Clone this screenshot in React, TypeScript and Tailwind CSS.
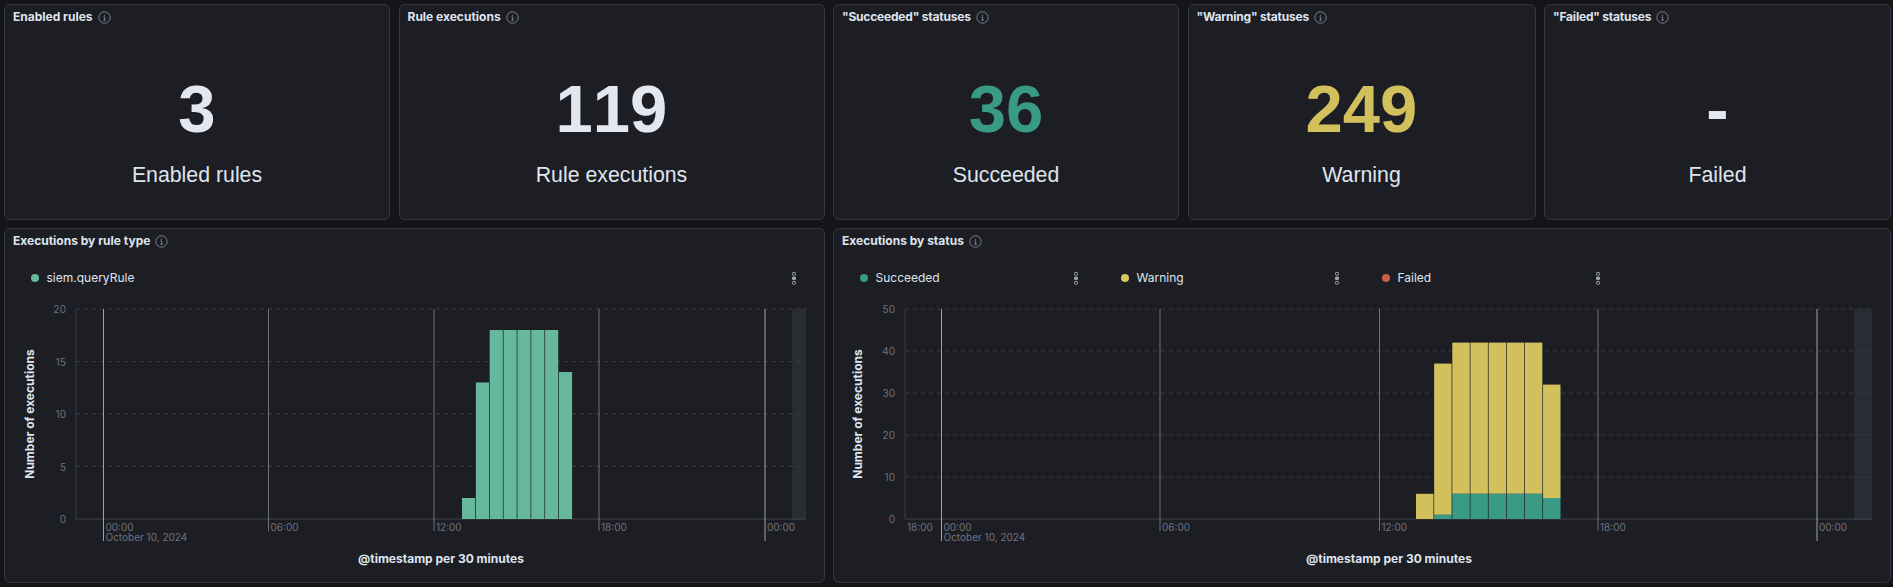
import React from 'react';

const sans = 'font-["Inter",sans-serif]';

interface StatProps {
  title: string;
  value: string;
  label: string;
  width: string;
  color: string;
  titleClass?: string;
}

const InfoIcon: React.FC = () => (
  <svg viewBox="0 0 16 16" className="w-[13px] h-[13px] text-[#98a2b3] shrink-0" fill="none" stroke="currentColor">
    <circle cx="8" cy="8" r="7" strokeWidth="0.9" />
    <path d="M6.6 7.2h1.6v4M6.4 11.3h3.4" strokeWidth="0.9" />
    <circle cx="7.9" cy="4.9" r="0.7" fill="currentColor" stroke="none" />
  </svg>
);

const BoxesIcon: React.FC = () => (
  <svg viewBox="0 0 4 13" className="w-[4px] h-[13px] text-[#a6aab2]" fill="none" stroke="currentColor" strokeWidth="0.9">
    <rect x="0.45" y="0.5" width="3.1" height="2.6" rx="0.6" />
    <rect x="0.45" y="5" width="3.1" height="2.6" rx="0.6" fill="currentColor" />
    <rect x="0.45" y="9.5" width="3.1" height="2.6" rx="0.6" />
  </svg>
);

const PanelTitle: React.FC<{ title: string; className?: string }> = ({ title, className = '' }) => (
  <div className={`flex items-center gap-[5px] h-[20px] ${sans} text-[12px] font-bold text-[#dfe5ef]`}>
    <span className={className}>{title}</span>
    <InfoIcon />
  </div>
);

const StatCard: React.FC<StatProps> = ({ title, value, label, width, color, titleClass }) => (
  <div className={`${width} h-[216px] shrink-0 flex flex-col bg-[#1d1e24] border border-[#343741] rounded-md pl-[8px] pt-[2px]`}>
    <PanelTitle title={title} className={titleClass} />
    <div className="flex flex-col items-center font-['Liberation_Sans',Arial,sans-serif] pr-[8px]">
      <div className={`mt-[44px] h-[76px] leading-[76px] text-[67px] font-bold [font-kerning:none] ${color}`}>{value}</div>
      <div className="mt-[16px] text-[21.3px] leading-[24px] text-[#dfe5ef]">{label}</div>
    </div>
  </div>
);

interface Bar {
  green: number;
  yellow: number;
}

interface ChartProps {
  box: string;
  axisX: number;
  endX: number;
  bandX: number;
  yMax: number;
  yTicks: number[];
  lines: { x: number; label: string }[];
  bars: Bar[];
  barX: number;
  barW: number;
  greenColor: string;
  leftTick?: { x: number; label: string };
  titleX: number;
  axisTitleX: number;
  tickX: number;
}

const TOP = 309;
const BOTTOM = 519;

// viewBox is in page coordinates, easier to line up with the screenshot
const Chart: React.FC<ChartProps> = ({ box, axisX, endX, bandX, yMax, yTicks, lines, bars, barX, barW, greenColor, leftTick, titleX, axisTitleX, tickX }) => {
  const y = (v: number) => BOTTOM - (v / yMax) * (BOTTOM - TOP);
  const [, , w, h] = box.split(' ').map(Number);
  return (
    <svg viewBox={box} width={w} height={h} className={`block ${sans}`}>
      <rect x={bandX} y={TOP} width={endX - bandX} height={BOTTOM - TOP + 1} fill="#2a2c33" />
      <line x1={axisX} x2={axisX} y1={TOP} y2={BOTTOM} stroke="#3a3c44" />
      <line x1={axisX} x2={endX} y1={BOTTOM} y2={BOTTOM} stroke="#3f4149" />
      {yTicks.map((t) => (
        <g key={t}>
          {t > 0 && <line x1={axisX} x2={endX} y1={y(t)} y2={y(t)} stroke="#3a3c44" strokeDasharray="4 4" />}
          <text x={tickX} y={y(t) + 4} textAnchor="end" fontSize="10" fill="#6d7280">{t}</text>
        </g>
      ))}
      {lines.map((l, i) => (
        <g key={l.x}>
          <line x1={l.x} x2={l.x} y1={TOP} y2={i === 0 || i === lines.length - 1 ? 541 : 531} stroke={i === 0 || i === lines.length - 1 ? '#a0a3aa' : '#6e7077'} />
          <text x={l.x + 2} y={531} fontSize="10" fill="#6d7280">{l.label}</text>
        </g>
      ))}
      <text x={lines[0].x + 2} y={541} fontSize="10" fill="#6d7280">October 10, 2024</text>
      {leftTick && <text x={leftTick.x} y={531} fontSize="10" fill="#6d7280">{leftTick.label}</text>}
      {bars.map((b, i) => {
        const x = barX + i * barW;
        return (
          <g key={i}>
            {b.yellow > 0 && <rect x={x} y={y(b.green + b.yellow)} width={barW - 0.7} height={(b.yellow / yMax) * (BOTTOM - TOP)} fill="#d2c05d" />}
            {b.green > 0 && <rect x={x} y={y(b.green)} width={barW - 0.7} height={(b.green / yMax) * (BOTTOM - TOP)} fill={greenColor} />}
          </g>
        );
      })}
      <text transform={`translate(${titleX} 414) rotate(-90)`} textAnchor="middle" fontSize="12" fontWeight="700" fill="#dfe5ef">Number of executions</text>
      <text x={axisTitleX} y={563} textAnchor="middle" fontSize="12" fontWeight="700" fill="#dfe5ef">@timestamp per 30 minutes</text>
    </svg>
  );
};

const LegendItem: React.FC<{ label: string; dot: string; width: string }> = ({ label, dot, width }) => (
  <div className={`flex items-center justify-between ${width} ${sans} text-[12px] text-[#dfe5ef]`}>
    <div className="flex items-center gap-[7.5px]">
      <span className={`w-2 h-2 rounded-full ${dot}`} />
      <span>{label}</span>
    </div>
    <BoxesIcon />
  </div>
);

const ruleBars: Bar[] = [2, 13, 18, 18, 18, 18, 18, 14].map((n) => ({ green: n, yellow: 0 }));
const statusBars: Bar[] = [
  { green: 0, yellow: 6 },
  { green: 1, yellow: 36 },
  { green: 6, yellow: 36 },
  { green: 6, yellow: 36 },
  { green: 6, yellow: 36 },
  { green: 6, yellow: 36 },
  { green: 6, yellow: 36 },
  { green: 5, yellow: 27 },
];

const App: React.FC = () => {
  return (
    <div className="w-[1893px] h-[587px] overflow-hidden bg-[#14151a] pl-[4px] pt-[4px]">
      <div className="flex gap-[8.5px]">
        <StatCard title="Enabled rules" value="3" label="Enabled rules" width="w-[386px]" color="text-[#e4e7f1]" />
        <StatCard title="Rule executions" value="119" label="Rule executions" width="w-[426px]" color="text-[#e4e7f1]" />
        <StatCard title={'"Succeeded" statuses'} titleClass="tracking-[-0.2px]" value="36" label="Succeeded" width="w-[346px]" color="text-[#399a86]" />
        <StatCard title={'"Warning" statuses'} titleClass="tracking-[-0.2px]" value="249" label="Warning" width="w-[348px]" color="text-[#d2c05d]" />
        <StatCard title={'"Failed" statuses'} titleClass="tracking-[-0.2px]" value="-" label="Failed" width="w-[347px]" color="text-[#e4e7f1]" />
      </div>
      <div className="flex gap-[8px] mt-[8px]">
        <div className="w-[821px] h-[355px] bg-[#1d1e24] border border-[#343741] rounded-md">
          <div className="pl-[8px] pt-[2px]"><PanelTitle title="Executions by rule type" /></div>
          <div className="flex pl-[26px] mt-[17px] mb-[11px] h-[20px]">
            <LegendItem label="siem.queryRule" dot="bg-[#66b89c]" width="w-[765px]" />
          </div>
          <Chart
            box="5 299 819 283"
            axisX={76}
            endX={806}
            bandX={792}
            yMax={20}
            yTicks={[0, 5, 10, 15, 20]}
            lines={[
              { x: 103.5, label: '00:00' },
              { x: 268.5, label: '06:00' },
              { x: 434, label: '12:00' },
              { x: 599, label: '18:00' },
              { x: 765, label: '00:00' },
            ]}
            bars={ruleBars}
            barX={462}
            barW={13.85}
            greenColor="#66b89c"
            titleX={34}
            axisTitleX={441}
            tickX={66}
          />
        </div>
        <div className="w-[1058px] h-[355px] bg-[#1d1e24] border border-[#343741] rounded-md">
          <div className="pl-[8px] pt-[2px]"><PanelTitle title="Executions by status" /></div>
          <div className="flex pl-[26px] mt-[17px] mb-[11px] h-[20px] gap-[43px]">
            <LegendItem label="Succeeded" dot="bg-[#399a86]" width="w-[218px]" />
            <LegendItem label="Warning" dot="bg-[#d9c95b]" width="w-[218px]" />
            <LegendItem label="Failed" dot="bg-[#cc5f42]" width="w-[218px]" />
          </div>
          <Chart
            box="834 299 1056 283"
            axisX={905}
            endX={1872}
            bandX={1854}
            yMax={50}
            yTicks={[0, 10, 20, 30, 40, 50]}
            lines={[
              { x: 941.5, label: '00:00' },
              { x: 1160, label: '06:00' },
              { x: 1379.5, label: '12:00' },
              { x: 1598, label: '18:00' },
              { x: 1817, label: '00:00' },
            ]}
            bars={statusBars}
            barX={1416}
            barW={18.15}
            greenColor="#399a86"
            leftTick={{ x: 907, label: '18:00' }}
            titleX={862}
            axisTitleX={1389}
            tickX={895}
          />
        </div>
      </div>
    </div>
  );
};

export default App;
